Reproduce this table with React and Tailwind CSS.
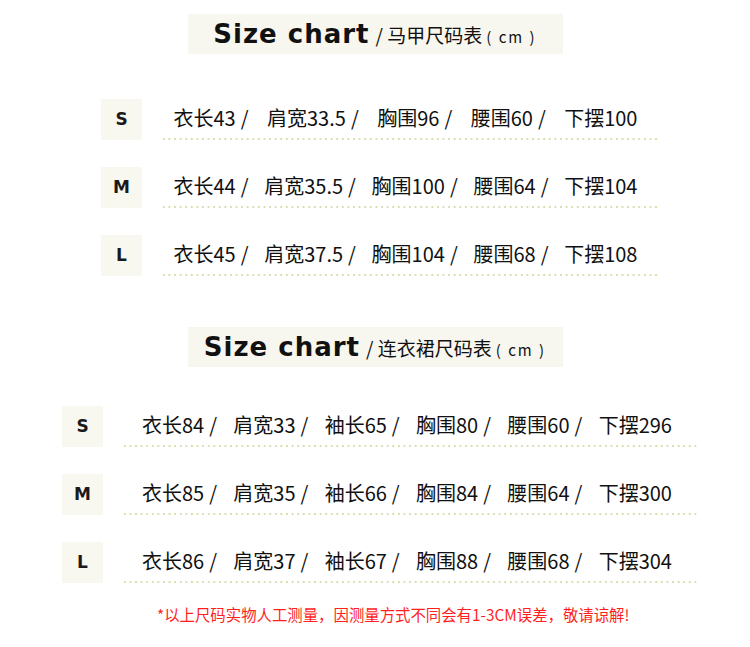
const vest = [
  { size: 'S', items: ['衣长43', '肩宽33.5', '胸围96', '腰围60', '下摆100'] },
  { size: 'M', items: ['衣长44', '肩宽35.5', '胸围100', '腰围64', '下摆104'] },
  { size: 'L', items: ['衣长45', '肩宽37.5', '胸围104', '腰围68', '下摆108'] },
];

const dress = [
  { size: 'S', items: ['衣长84', '肩宽33', '袖长65', '胸围80', '腰围60', '下摆296'] },
  { size: 'M', items: ['衣长85', '肩宽35', '袖长66', '胸围84', '腰围64', '下摆300'] },
  { size: 'L', items: ['衣长86', '肩宽37', '袖长67', '胸围88', '腰围68', '下摆304'] },
];

const Title = ({ name }) => (
  <div className="flex justify-center">
    <div className="w-[375px] h-[40px] bg-[#f8f7ef] flex items-center justify-center gap-[6px]">
      <span className="font-['DejaVu_Sans',sans-serif] font-bold text-[26px] tracking-[1px] text-[#111]">
        Size chart
      </span>
      <span className="font-['Noto_Sans_CJK_SC',sans-serif] text-[19px] text-[#111] mt-[3px]">
        / {name}
        <span className="text-[15px] ml-[4px] tracking-[2px]">( cm )</span>
      </span>
    </div>
  </div>
);

const Row = ({ size, items, textW, lineW }) => (
  <div className="flex items-end gap-[19px]">
    <div className="w-[41px] h-[41px] bg-[#f9f8f0] flex items-center justify-center font-['DejaVu_Sans',sans-serif] font-bold text-[17px] text-[#1a1a1a]">
      {size}
    </div>
    <div className="flex flex-col items-center" style={{ width: lineW }}>
      <div
        className="flex justify-between items-center font-['Noto_Sans_CJK_SC',sans-serif] text-[20px] leading-[26px] text-[#111] pr-[8px]"
        style={{ width: textW }}
      >
        {items.map((t, i) => (
          <span key={i} className="flex items-center">
            {t}
            {i < items.length - 1 && <span className="ml-[5px]">/</span>}
          </span>
        ))}
      </div>
      <div className="mt-[7px] w-full h-[2px] bg-[radial-gradient(circle,#dcdcae_0.9px,transparent_1.1px)] bg-[length:5.6px_2px]"></div>
    </div>
  </div>
);

export default function App() {
  return (
    <div className="w-[750px] h-[647px] bg-white overflow-hidden">
      <div className="pt-[14px]">
        <Title name="马甲尺码表" />
      </div>
      <div className="mt-[45px] flex flex-col gap-[27px] pl-[101px]">
        {vest.map((r) => (
          <Row key={r.size} {...r} textW={472} lineW={497} />
        ))}
      </div>
      <div className="mt-[51px]">
        <Title name="连衣裙尺码表" />
      </div>
      <div className="mt-[39px] flex flex-col gap-[27px] pl-[62px]">
        {dress.map((r) => (
          <Row key={r.size} {...r} textW={538} lineW={578} />
        ))}
      </div>
      <div className="mt-[20px] pl-[157px] font-['Noto_Sans_CJK_SC',sans-serif] text-[15.4px] text-[#ff1f1f]">
        *以上尺码实物人工测量，因测量方式不同会有1-3CM误差，敬请谅解!
      </div>
    </div>
  );
}
